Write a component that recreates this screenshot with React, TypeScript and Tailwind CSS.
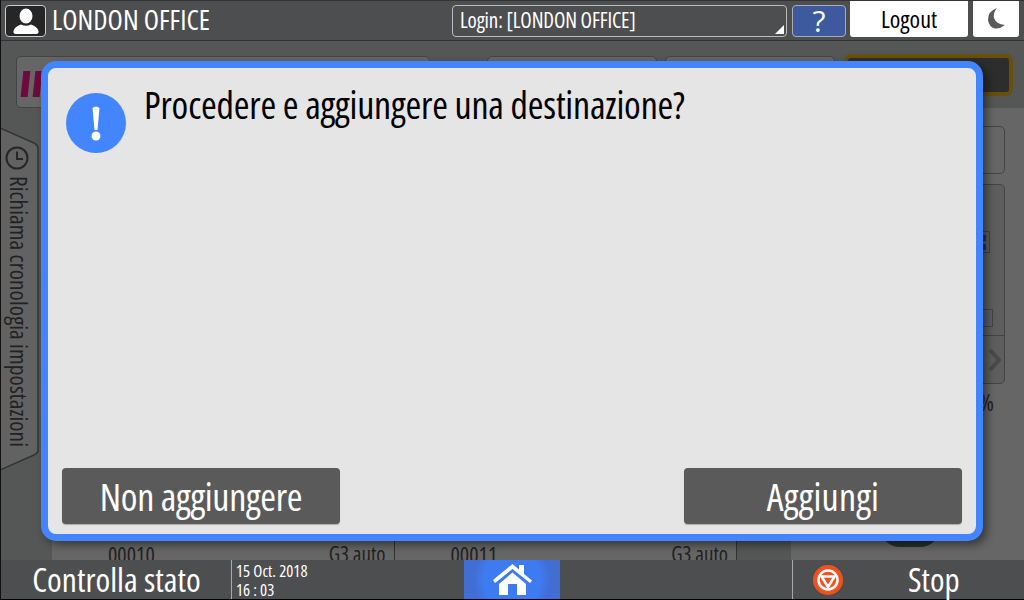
const font = "font-['Open_Sans','Noto_Sans',sans-serif]";

function UserIcon() {
  return (
    <svg width="32" height="28" viewBox="0 0 32 28" fill="white">
      <ellipse cx="16" cy="9" rx="6.5" ry="7.5" />
      <path d="M6 27 Q3 27 3.5 24 Q4.5 19.5 11 17.5 Q16 20 21 17.5 Q27.5 19.5 28.5 24 Q29 27 26 27 Z" />
    </svg>
  );
}

function HomeIcon() {
  return (
    <svg width="39" height="31" viewBox="0 0 39 31" fill="white">
      <path d="M0 16 L19.5 0 L26 5.5 L26 1 L31 1 L31 10 L39 16.5 L37 19 L19.5 5 L2 19 Z" />
      <path fillRule="evenodd" d="M6 20 L19.5 8.5 L33 20 L33 31 L6 31 Z M15 20 L15 31 L24 31 L24 20 Z" />
    </svg>
  );
}

function StopIcon() {
  return (
    <svg width="30" height="30" viewBox="0 0 30 30">
      <circle cx="15" cy="15" r="15" fill="#f0521f" />
      <circle cx="15" cy="15" r="9.5" fill="none" stroke="white" strokeWidth="2.5" />
      <path d="M8.5 11.5 H21.5 L15 22 Z" fill="none" stroke="white" strokeWidth="2.5" strokeLinejoin="round" />
    </svg>
  );
}

function HistoryTab() {
  return (
    <div className="absolute left-0 top-[128px] h-[343px] w-[39px]">
      <svg className="absolute inset-0" width="39" height="343" viewBox="0 0 39 343">
        <path d="M0 0 L34 15 Q38 17 38 21 L38 322 Q38 325 34 327 L0 342 Z" fill="#626262" stroke="#333" strokeWidth="1.5" />
      </svg>
      <div className="relative flex flex-col items-center pr-[5px] pt-[18px]">
        <svg width="24" height="24" viewBox="0 0 24 24" fill="none" stroke="#262626" strokeWidth="2">
          <circle cx="12" cy="12" r="10.5" />
          <path d="M12 5.5 V13 H18" />
        </svg>
        <span className="ml-[3px] mt-[6px] text-[23.5px] leading-[26px] text-[#222] [writing-mode:vertical-rl] [font-stretch:75%]">
          Richiama cronologia impostazioni
        </span>
      </div>
    </div>
  );
}

function Background() {
  return (
    <div className="flex min-h-0 flex-1 flex-col bg-[#555656]">
      <div className="flex h-[67px] items-start pl-[16px] pt-[15px]">
        <div className="mr-[57px] flex h-[52px] w-[414px] items-center rounded-[5px] border border-[#444] bg-[#666] pl-[5px] pt-[3px]">
          <div className="h-[26px] w-[7px] -skew-x-[6deg] bg-[#6d0a3f]" />
          <div className="ml-[5px] h-[26px] w-[7px] -skew-x-[6deg] bg-[#6d0a3f]" />
        </div>
        <div className="h-[40px] w-[170px] rounded-[5px] border border-[#444] bg-[#666]" />
        <div className="ml-[8px] mr-[9px] h-[40px] w-[170px] rounded-[5px] border border-[#444] bg-[#666]" />
        <div className="-mt-[2px] h-[42px] w-[169px] rounded-[7px] border-[4px] border-[#66500c] bg-[#2d2d2d]" />
      </div>
      <div className="flex min-h-0 flex-1">
        <div className="flex w-[791px] items-end pl-[52px] pr-[54px]">
          {["00010", "00011"].map((code) => (
            <div key={code} className="relative flex h-[30px] flex-1 items-end justify-between overflow-hidden border-r border-[#333] bg-[#666] pl-[56px] pr-[8px] text-[22px] leading-[22px] text-[#222]">
              <div className="absolute left-[20px] top-0 h-[2px] w-[24px] bg-[#3a1a4f]" />
              <span className="translate-y-[5px] [font-stretch:75%]">{code}</span>
              <span className="translate-y-[5px] text-[21px] [font-stretch:75%]">G3 auto</span>
            </div>
          ))}
        </div>
        <div className="flex flex-1 flex-col items-end bg-[#666] pr-[19px] pt-[18px]">
          <div className="h-[48px] w-[190px] rounded-[5px] border border-[#444]" />
          <div className="mt-[10px] flex h-[200px] w-[190px] flex-col rounded-[5px] border border-[#444] bg-[#5e5e5e]">
            <div className="flex h-[151px] flex-col items-end border-b border-[#444]">
              <div className="mr-[14px] mt-[46px] flex h-[22px] w-[20px] flex-col items-end justify-center gap-[3px] border border-[#444] pr-[3px]">
                <div className="h-[6px] w-[6px] bg-[#1a3468]" />
                <div className="h-[6px] w-[6px] bg-[#1a3468]" />
              </div>
              <div className="mr-[11px] mt-[56px] flex h-[18px] w-[20px] items-center justify-end border border-[#444] pr-[2px] text-[13px] leading-none text-[#3f5aa8]">2</div>
            </div>
            <div className="flex flex-1 items-center justify-end pr-[3px]">
              <svg width="13" height="24" viewBox="0 0 13 24" fill="none" stroke="#4a4a4a" strokeWidth="4">
                <path d="M2 2 L11 12 L2 22" />
              </svg>
            </div>
          </div>
          <span className="mr-[11px] mt-[4px] text-[24px] leading-[28px] text-[#222] [font-stretch:75%]">%</span>
          <div className="mr-[65px] mt-auto mb-[13px] h-[20px] w-[60px] rounded-b-full bg-[#26302f]" />
        </div>
      </div>
    </div>
  );
}

function Dialog() {
  return (
    <div className="absolute left-[41px] top-[61px] flex h-[480px] w-[942px] flex-col justify-between rounded-[15px] border-[7px] border-[#4285ff] bg-[#e5e5e5] px-[14px] pb-[10px] pt-[25px] shadow-[4px_4px_8px_rgba(0,0,0,0.45)]">
      <div className="flex gap-[18px] pl-[4px]">
        <div className="flex h-[60px] w-[60px] shrink-0 items-center justify-center rounded-full bg-[#4285ff]">
          <svg width="14" height="36" viewBox="0 0 14 36" fill="white">
            <path d="M3.5 3 Q7 0 10.5 3 L8.5 25 L5.5 25 Z" />
            <circle cx="7" cy="31" r="4.5" />
          </svg>
        </div>
        <p className="mt-[-14px] text-[38px] leading-[50px] tracking-[-0.2px] text-black [font-stretch:75%]">Procedere e aggiungere una destinazione?</p>
      </div>
      <div className="flex justify-between">
        <button className="h-[56px] w-[278px] rounded-[4px] bg-[#5a5a5a] text-[38px] tracking-[-0.3px] text-white shadow-[0_1px_1px_#aaa] [font-stretch:75%]">Non aggiungere</button>
        <button className="h-[56px] w-[278px] rounded-[4px] bg-[#5a5a5a] text-[38px] tracking-[0.2px] text-white shadow-[0_1px_1px_#aaa] [font-stretch:75%]">Aggiungi</button>
      </div>
    </div>
  );
}

export default function App() {
  return (
    <div className={`relative flex h-[600px] w-[1024px] flex-col overflow-hidden bg-[#4d4e50] ${font}`}>
      <header className="flex h-[41px] shrink-0 items-center border-b border-t border-[#333] bg-[#4d4e50] pl-[5px] pr-[5px]">
        <div className="flex h-[32px] w-[41px] items-center justify-center rounded-[4px] border border-[#ccc] bg-[#262626]">
          <UserIcon />
        </div>
        <span className="ml-[6px] -mt-[3px] text-[28px] leading-none text-white [font-stretch:75%]">LONDON OFFICE</span>
        <div className="relative ml-auto flex h-[32px] w-[335px] items-center rounded-[4px] border border-[#bbb] pl-[7px] text-[21px] tracking-[-0.15px] text-white">
          <span className="[font-stretch:75%]">Login: [LONDON OFFICE]</span>
          <div className="absolute bottom-[2px] right-[2px] h-0 w-0 border-b-[9px] border-l-[9px] border-b-white border-l-transparent" />
        </div>
        <div className="ml-[5px] flex h-[32px] w-[54px] items-center justify-center rounded-[4px] border border-[#aab] bg-[#3d5a9f] text-[30px] leading-none text-white">?</div>
        <div className="ml-[4px] flex h-[36px] w-[118px] -translate-y-[2px] items-center justify-center rounded-b-[3px] bg-white text-[24px] text-black [font-stretch:75%]">Logout</div>
        <div className="ml-[5px] flex h-[36px] w-[46px] -translate-y-[2px] items-center justify-center rounded-b-[3px] bg-white">
          <svg width="17" height="21" viewBox="0 0 17 21" fill="#5a5a5a">
            <path d="M9 0 Q5 5 6 10 Q8 16 17 17 Q12 21 7 20.5 Q1 19 0 12 Q0 3 9 0 Z" />
          </svg>
        </div>
      </header>
      <Background />
      <footer className="flex h-[40px] shrink-0 items-center border-b border-black bg-[#4d4e50] text-white">
        <div className="flex w-[231px] justify-center pl-[2px] text-[33.5px] [font-stretch:75%]">Controlla stato</div>
        <div className="flex h-full w-[233px] flex-col justify-center border-l border-[#aaa] pl-[4px] text-[16.7px] leading-[19px] [font-stretch:75%]">
          <span>15 Oct. 2018</span>
          <span>16 : 03</span>
        </div>
        <div className="flex h-full w-[96px] items-center justify-center bg-[#426dd3] bg-[radial-gradient(circle,#3f7bf0_0%,#3f7bf0_55%,#426dd3_75%)]">
          <HomeIcon />
        </div>
        <div className="ml-[232px] flex h-full flex-1 items-center border-l border-[#aaa] pl-[20px]">
          <StopIcon />
          <span className="ml-[65px] text-[33px] [font-stretch:75%]">Stop</span>
        </div>
      </footer>
      <HistoryTab />
      <Dialog />
      <div className="absolute bottom-0 left-0 top-0 w-px bg-[#111]" />
    </div>
  );
}
